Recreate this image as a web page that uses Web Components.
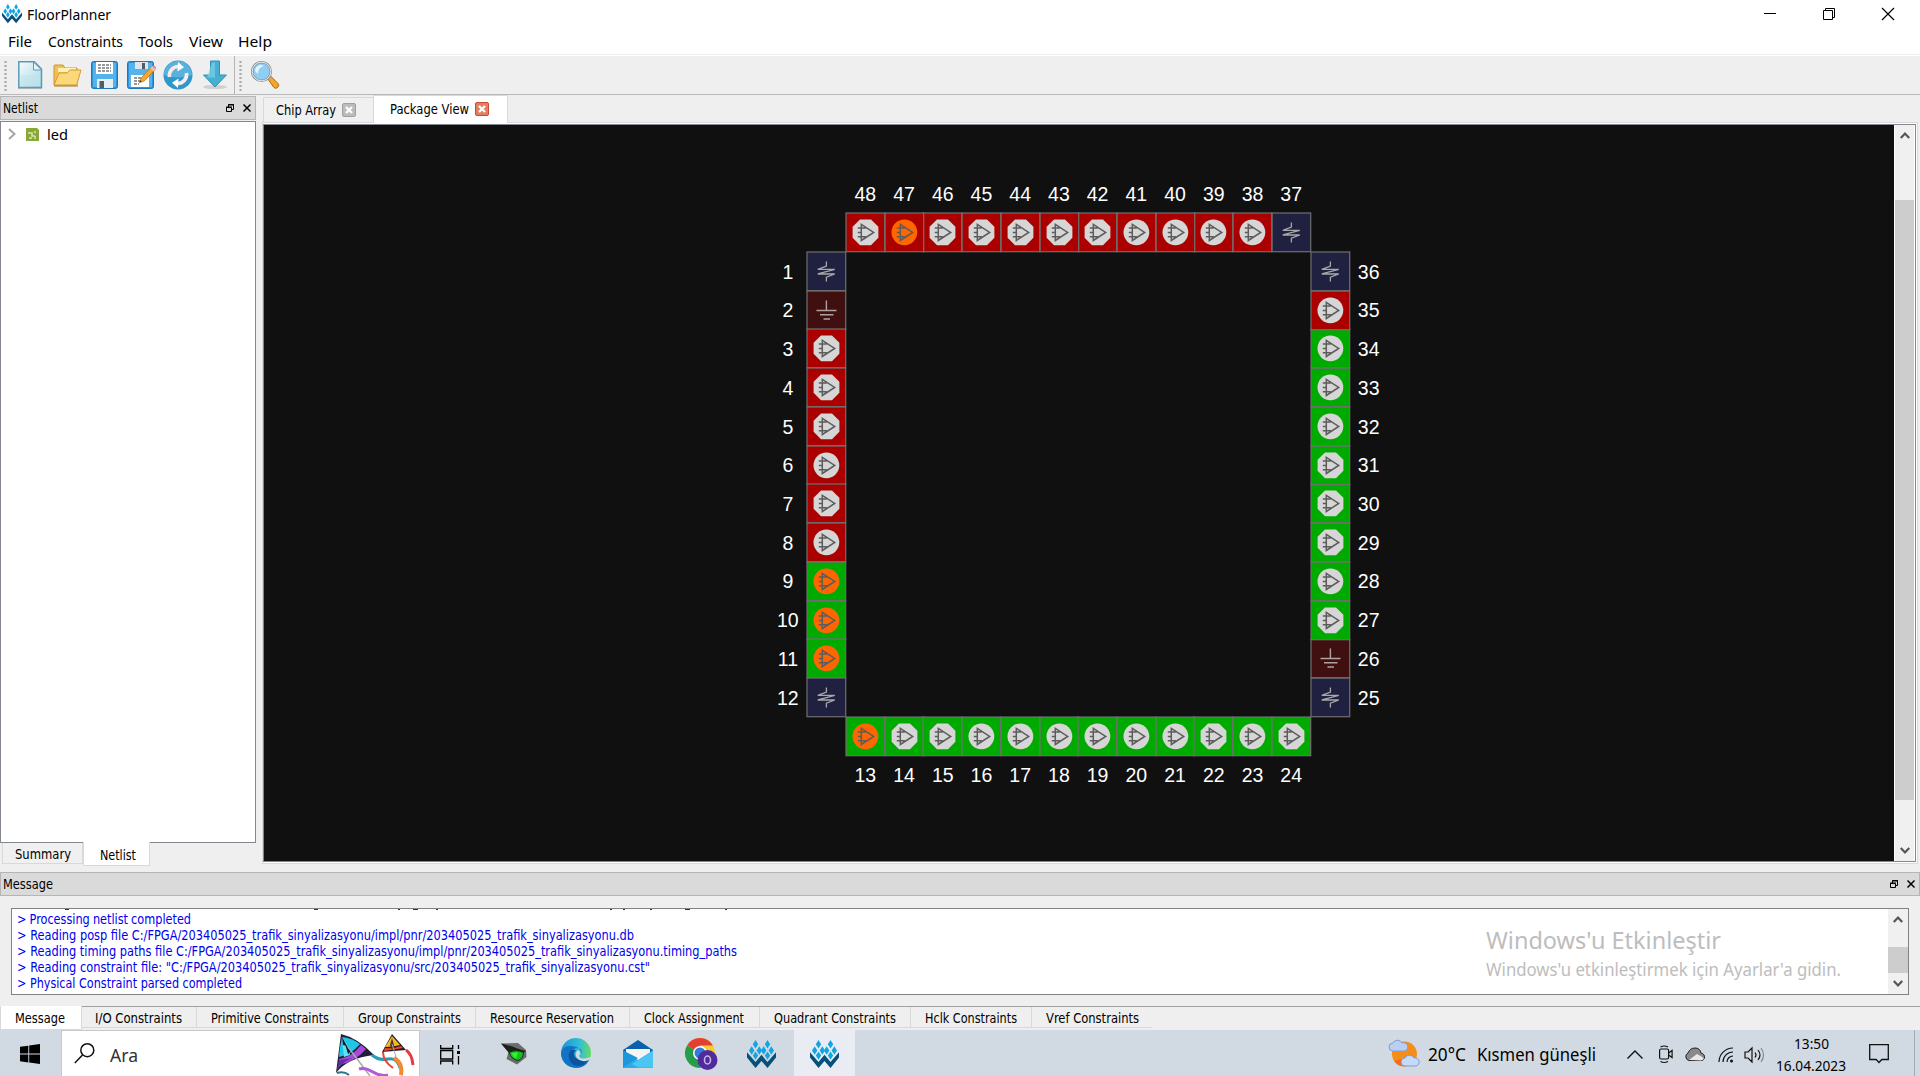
<!DOCTYPE html>
<html lang="tr">
<head>
<meta charset="utf-8">
<title>FloorPlanner</title>
<style>
html,body{margin:0;height:100%;overflow:hidden;background:#efefef;color:#000}
</style>
</head>
<body>
<floor-planner></floor-planner>
<script>
const pending=[];
class FitText extends HTMLElement{
  constructor(){super();this.attachShadow({mode:'open'}).innerHTML=`<style>:host{display:block;flex:none;white-space:pre}span{display:inline-block;transform-origin:0 50%}</style><span><slot></slot></span>`;}
  connectedCallback(){pending.push(this);}
  fit(){const w=parseFloat(this.getAttribute('w'));if(!w)return;const s=this.shadowRoot.querySelector('span');this.style.width=w+'px';const n=s.offsetWidth?s.getBoundingClientRect().width:w;s.style.transform=`scaleX(${w/n})`;}
}
customElements.define('fit-text',FitText);

function make(tag,css,html){
  customElements.define(tag,class extends HTMLElement{
    constructor(){super();this.attachShadow({mode:'open'}).innerHTML=`<style>*{box-sizing:border-box}svg{display:block;flex:none;overflow:visible}${css}</style>${typeof html==='function'?html(this):html}`;}
  });
}

make('gowin-logo',':host{display:block;flex:none;width:var(--s,29px)}svg{width:100%}',
`<svg viewBox="0 0 29 28"><g fill="#13a5e3"><path d="M8.500 0l2.700 4.200-2.700 4.200-2.700-4.200zM20.500 0l2.700 4.200-2.700 4.200-2.700-4.200zM4.700 6.300l2.700 4.200-2.700 4.200L2 10.500zM12.300 6.300l2.700 4.200-2.700 4.200-2.700-4.200zM16.700 6.300l2.700 4.200-2.700 4.200-2.700-4.200zM24.300 6.300l2.700 4.200-2.700 4.200-2.700-4.200zM8.500 11.400l2.700 4.200-2.700 4.200-2.700-4.200zM20.500 11.400l2.700 4.200-2.700 4.200-2.700-4.200z"/></g><path d="M0 12.300l8.500 9.800 6-7.300 6 7.300 8.500-9.800v5.200l-8.500 10.500-6-7-6 7L0 17.500z" fill="#085078"/></svg>`);

make('title-bar',`:host{display:flex;height:28px;background:#fff;align-items:center;padding:0 26px 0 2px;font:15px/20px "Noto Sans",sans-serif}
gowin-logo{--s:20px;margin-right:5px}.sp{flex:1}.b{display:flex;gap:47px;align-items:center}`,
`<gowin-logo></gowin-logo><fit-text w="84">FloorPlanner</fit-text><div class="sp"></div><div class="b"><svg width="12" height="12"><path d="M0 5.500h12" stroke="#000"/></svg><svg width="12" height="12" fill="none" stroke="#000"><path d="M.5 2.500h9v9h-9zM2.500 2.500v-2h9v9h-2"/></svg><svg width="12" height="12"><path d="M0 0l12 12M12 0L0 12" stroke="#000" stroke-width="1.200"/></svg></div>`);

make('menu-bar',`:host{display:flex;height:28px;background:#fff;border-bottom:1px solid #fff;box-shadow:inset 0 -1px #f0f0f0;align-items:center;gap:15.500px;padding-left:8px;font:15px/20px "Noto Sans",sans-serif}fit-text{position:relative;top:-1px}`,
`<fit-text w="24">File</fit-text><fit-text w="75">Constraints</fit-text><fit-text w="35">Tools</fit-text><fit-text w="34">View</fit-text><fit-text w="34">Help</fit-text>`);

const floppy=`<rect x=".5" y=".5" width="26" height="27" rx="2" fill="#2f93d6" stroke="#1d77ba"/><rect x="2" y="2" width="23" height="24" fill="#55b3ec"/>`;
make('tool-bar',`:host{display:flex;height:39px;background:#efefef;border-bottom:1px solid #b9b9b9;align-items:center;padding-left:4px}
.h{width:3px;height:31px;background:radial-gradient(circle,#aaa 1px,transparent 1.300px) 0 0/3px 4px}.s{width:1px;height:38px;background:#b5b5b5}`,
`<div class="h"></div>
<svg width="25" height="28" style="margin-left:11px"><defs><linearGradient id="g" x1="0" y1="0" x2="1" y2="1"><stop offset="0" stop-color="#f4fbfd"/><stop offset="1" stop-color="#a8d8e6"/></linearGradient></defs><path d="M.8.800h15.500l7.200 7.200v18.500H.8z" fill="url(#g)" stroke="#5a9cb6" stroke-width="1.500"/><path d="M2.500 14h19.500v11H2.500z" fill="#bfe3ef" opacity=".6"/><path d="M15.500 1v8h8z" fill="#e6f5fa" stroke="#5a9cb6"/><path d="M0 27.500h24" stroke="#999" opacity=".6"/></svg>
<svg width="29" height="24" style="margin-left:10px"><path d="M1 22V3q0-1 1-1h8l2 3h12v17z" fill="#f3bf52" stroke="#cf9530"/><path d="M5 5h18v4H5z" fill="#fff0b8"/><path d="M1 22L6 10h8l3-3h11l-4 14q0 1-1 1z" fill="#fbd879" stroke="#d49b35"/><path d="M1 23h24" stroke="#a87a2b"/></svg>
<svg width="27" height="28" style="margin-left:8.500px">${floppy}<path d="M5 1h17v12H5z" fill="#fff"/><path d="M7 4h13M7 7h13M7 10h13" stroke="#777" stroke-width="1.500" stroke-dasharray="3 1"/><path d="M6 18h16v9H6z" fill="#e8edf0"/><path d="M8.500 20h4.500v7H8.500z" fill="#555b63"/></svg>
<svg width="30" height="28" style="margin-left:9px">${floppy}<path d="M8 1h13v7H8z" fill="#dfe5e9"/><path d="M15 2h3v6h-3z" fill="#555b63"/><path d="M4 14h18v12H4z" fill="#fff"/><path d="M7 17h9M7 20h8M7 23h5" stroke="#777" stroke-width="1.500" stroke-dasharray="3 1"/><path d="M12.500 21.500l2-5L25 5.500l3.200 3L17.500 19.800z" fill="#f9a72b" stroke="#b87520" stroke-width=".8"/><path d="M23.300 7.200l2-2.200 3.200 3.200-2 2.100z" fill="#c8cdd6"/><path d="M25.200 5.300q1.500-1.500 3.200 0t0 3.300z" fill="#e98aa0"/><path d="M12.500 21.500l.8-2.200 1.400 1.400z" fill="#333"/></svg>
<svg width="30" height="30" style="margin-left:6.500px"><circle cx="15" cy="15" r="14.500" fill="#2e97cb"/><path d="M1 15a14 14 0 0128 0q-14 5-28 0" fill="#58b2dc"/><g fill="none" stroke="#fbe9ec" stroke-width="3.600"><path d="M6.500 17A9 9 0 0116 6.500"/><path d="M23.500 13A9 9 0 0114 23.500"/></g><path d="M15 2l6 5.200-6.500 4.300zM15 28l-6-5.200 6.500-4.300z" fill="#fff"/></svg>
<svg width="27" height="30" style="margin-left:9px"><ellipse cx="13" cy="27" rx="12" ry="2" fill="#bbb" opacity=".6"/><path d="M8.500 1h9v14h7L13 27 1.500 15h7z" fill="#45b0d2" stroke="#2f93b6"/><path d="M10 2.500h3v15H5z" fill="#7fd0e6" opacity=".7"/></svg>
<div class="s" style="margin-left:5px"></div><div class="h" style="margin-left:4px"></div>
<svg width="30" height="30" style="margin-left:8px"><path d="M17.500 18.500l3-2.500 7.500 7.500q1.800 2-.5 4t-4-.5z" fill="#f6a626" stroke="#a86a18"/><circle cx="11.500" cy="11.500" r="9.300" fill="#8fcdf2" stroke="#8a969f" stroke-width="2.600"/><circle cx="11.500" cy="11.500" r="9.300" fill="none" stroke="#e6eaed"/><path d="M5 11q0-5 5.500-6.300L14 6q-6 1-6 8z" fill="#e3f4fd"/></svg>`);

make('dock-title',`:host{display:flex;height:24px;background:#dadada;border:1px solid #b5b5b5;align-items:center;padding:0 4px 0 2px;font:13.300px/16px "DejaVu Sans Condensed","DejaVu Sans",sans-serif}.sp{flex:1}.tx{padding-top:2px}svg+svg{margin-left:9px}`,
`<div class="tx"><slot></slot></div><div class="sp"></div><svg width="8" height="8" fill="none" stroke="#000"><path d="M.5 3.500h5v4h-5zM0 3h6M2.500 3V.5h5v5H6M2 1h6"/></svg><svg width="8" height="8"><path d="M.5.500l7 7M7.500.500l-7 7" stroke="#000" stroke-width="1.500"/></svg>`);

make('close-box',`:host{display:block;flex:none}`,h=>{const r=h.hasAttribute('hot');return `<svg width="14" height="14"><rect x=".5" y=".5" width="13" height="13" rx="1.500" fill="${r?'#e08060':'#bcbcbc'}" stroke="${r?'#d3452f':'#a0a0a0'}"/><path d="M4 4l6 6M10 4l-6 6" stroke="#fff" stroke-width="2.300"/></svg>`});

make('netlist-dock',`:host{display:flex;flex-direction:column;width:256px;height:770px;margin-top:1px;font:13.300px/16px "DejaVu Sans Condensed","DejaVu Sans",sans-serif}
.tree{margin-top:1px;height:722px;border:1px solid #828790;background:#fff;flex:none}
.row{display:flex;align-items:center;height:24px;padding-left:7px;font:15px/20px "Noto Sans",sans-serif}
.tabs{display:flex;align-items:flex-start;padding-left:2px}
.t{height:21px;width:81px;background:#f0f0f0;border:1px solid #d9d9d9;border-top:0;padding:4px 0 0 12px}
.t.on{height:24px;width:67px;background:#fff;padding:6px 0 0 16px;margin-top:-1px}`,
`<dock-title><fit-text w="35">Netlist</fit-text></dock-title>
<div class="tree"><div class="row"><svg width="8" height="12"><path d="M1 1l5.500 5L1 11" fill="none" stroke="#a6a6a6" stroke-width="2"/></svg><svg width="13" height="13" style="margin:0 8px 0 10px"><path d="M0 0h11l2 2v11H0z" fill="#86a93a"/><path d="M2 5h4v3h3M9 3v2M3 10h3M9 8v3" stroke="#d6e8a8" stroke-width="1.500" fill="none"/></svg><fit-text w="21">led</fit-text></div></div>
<div class="tabs"><div class="t"><fit-text w="56">Summary</fit-text></div><div class="t on"><fit-text w="36">Netlist</fit-text></div></div>`);

make('scroll-bar',`:host{display:flex;flex-direction:column;background:#f0f0f0;align-items:center;flex:none;box-sizing:border-box}.th{background:#cdcdcd;width:100%}.sp{flex:1}`,
h=>`<svg width="10" height="7" style="margin-top:${h.getAttribute('a')}px"><path d="M.8 6L5 1.500 9.200 6" fill="none" stroke="#555" stroke-width="2.200"/></svg><div class="th" style="margin-top:${h.getAttribute('g')}px;height:${h.getAttribute('t')}px"></div><div class="sp"></div><svg width="10" height="7" style="margin-bottom:${h.getAttribute('a')}px"><path d="M.8 1L5 5.500 9.200 1" fill="none" stroke="#555" stroke-width="2.200"/></svg>`);

make('chip-pin',':host{display:block;width:100%;height:100%}svg{width:100%;height:100%}',h=>{
  const k=h.getAttribute('kind'),bg=h.getAttribute('bank');
  const body=k==='v'?'<path d="M19.400 9.500v4.500l-8.600 3.300h17L10.800 22h17l-8.400 3.200v4.300" fill="none" stroke="#a8a8a8" stroke-width="1.300"/>'
  :k==='g'?'<path d="M19.400 9.500v10M9.500 19.500h20M13 23.700h13.500M16.500 28h6.500" fill="none" stroke="#b0a0a0" stroke-width="1.400"/>'
  :(k==='o'?'<path d="M14 6.400h11l7.400 7.400v11L25 32.200H14l-7.400-7.400v-11z" fill="#d6d6d6"/>':`<circle cx="19.400" cy="19.300" r="12.900" fill="${k==='u'?'#ff6600':'#d6d6d6'}"/>`)+'<path d="M15.300 11.300v16.200L27.700 19.400zM11.800 15h8M11.800 19.400h3.500M11.800 23.700h8" fill="none" stroke="#5c5c5c" stroke-width="1.500"/>';
  return `<svg viewBox="0 0 38.730 38.730"><rect width="38.730" height="38.730" fill="${bg}" stroke="#707070" stroke-width="1.200"/>${body}</svg>`});

make('package-view',`:host{display:flex;box-sizing:border-box;flex:1;background:#101010;justify-content:center;align-items:flex-start;padding:49.600px 1.500px 0 0;color:#fff;font:19.500px/1 "Liberation Sans",Arial,sans-serif}
.g{display:grid;grid-template:repeat(16,38.730px)/repeat(16,38.730px)}.n{display:flex;align-items:center;justify-content:center;padding-top:2px}`,()=>{
  const R='#aa0000',G='#00aa00',V='#202040',D='#401010';let s='';
  const kinds={};'1v 2g 3o 4o 5o 6c 7o 8c 9u 10u 11u 12v 13u 14o 15o 16c 17c 18c 19c 20c 21c 22o 23c 24o 25v 26g 27o 28c 29o 30o 31o 32c 33c 34c 35c 36v 37v 38c 39c 40c 41c 42o 43o 44o 45o 46o 47u 48o'.split(' ').forEach(x=>kinds[parseInt(x)]=x.slice(-1));
  for(let n=1;n<=48;n++){let r,c,lr,lc;
    if(n<13){r=n+2;c=2;lr=r;lc=1}else if(n<25){r=15;c=n-10;lr=16;lc=c}else if(n<37){r=39-n;c=15;lr=r;lc=16}else{r=2;c=51-n;lr=1;lc=c}
    const k=kinds[n],b=k==='v'?V:k==='g'?D:(n>8&&n<35?G:R);
    s+=`<div class="n" style="grid-area:${lr}/${lc}">${n}</div><chip-pin style="grid-area:${r}/${c}" kind="${k}" bank="${b}"></chip-pin>`;}
  return `<div class="g">${s}</div>`});

make('view-area',`:host{display:flex;flex-direction:column;width:1656px;margin-left:6px;font:13.300px/16px "DejaVu Sans Condensed","DejaVu Sans",sans-serif}
.tabs{display:flex;align-items:flex-end;height:27px;padding-left:1px}
.t{display:flex;align-items:center;height:25px;width:110px;border:1px solid #d9d9d9;border-width:1px 0 0 1px;padding-left:12px;gap:6px;background:#f0f0f0}
.t fit-text{padding-top:2px}
.t.on{height:28px;width:135px;border-right-width:1px;background:#fff;padding:0 0 1px 16px;margin-bottom:-1px;z-index:1}
.pane{border:1px solid #d9d9d9;background:#fff;padding:1px 1px 1px 0;height:742px}
.in{border:1px solid #828790;height:100%;display:flex}scroll-bar{width:21px;border:1px solid #fff;border-width:0 1px}`,
`<div class="tabs"><div class="t"><fit-text w="60">Chip Array</fit-text><close-box></close-box></div><div class="t on"><fit-text w="79">Package View</fit-text><close-box hot></close-box></div></div>
<div class="pane"><div class="in"><package-view></package-view><scroll-bar a="7" g="61" t="600"></scroll-bar></div></div>`);

make('message-dock',`:host{display:block;font:13.300px/16px "DejaVu Sans Condensed","DejaVu Sans",sans-serif}
.box{position:relative;margin:12px 11px 0;height:87px;border:1px solid #828282;background:#fff;display:flex;color:#0000f0}
.l{flex:1;padding:3px 0 0 5px}.l div{display:flex;gap:4.500px}scroll-bar{width:20px}.c{position:absolute;left:0;top:0}
.w{position:absolute;left:1474px;top:14px;color:#bdbdbd;font:18px/24px "Noto Sans",sans-serif}.w .a{font-size:24px;line-height:34px}`,
`<dock-title><fit-text w="50">Message</fit-text></dock-title>
<div class="box"><svg class="c" width="740" height="2" fill="#2222cc"><path d="M53 0h4v1h-4zM302 0h4v1h-4zM386 0h2v1h-2zM401 0h5v1h-5zM424 0h2v1h-2zM598 0h2v1h-2zM611 0h2v1h-2zM638 0h2v1h-2zM673 0h5v1h-5zM713 0h2v1h-2z"/></svg>
<div class="l"><fit-text w="174" style="word-spacing:-.5px">&gt; Processing netlist completed</fit-text><fit-text w="617">&gt; Reading posp file C:/FPGA/203405025_trafik_sinyalizasyonu/impl/pnr/203405025_trafik_sinyalizasyonu.db</fit-text><fit-text w="720">&gt; Reading timing paths file C:/FPGA/203405025_trafik_sinyalizasyonu/impl/pnr/203405025_trafik_sinyalizasyonu.timing_paths</fit-text><fit-text w="633">&gt; Reading constraint file: "C:/FPGA/203405025_trafik_sinyalizasyonu/src/203405025_trafik_sinyalizasyonu.cst"</fit-text><fit-text w="225">&gt; Physical Constraint parsed completed</fit-text></div>
<scroll-bar a="7" g="24" t="26"></scroll-bar>
<div class="w"><fit-text class="a" w="235">Windows'u Etkinleştir</fit-text><fit-text w="355">Windows'u etkinleştirmek için Ayarlar'a gidin.</fit-text></div></div>`);

const tabs=[['I/O Constraints',115,87],['Primitive Constraints',147,118],['Group Constraints',132,103],['Resource Reservation',154,124],['Clock Assignment',130,100],['Quadrant Constraints',151,122],['Hclk Constraints',121,92],['Vref Constraints',120,93]];
make('bottom-tabs',`:host{display:flex;height:24px;margin-top:11px;font:13.300px/16px "DejaVu Sans Condensed","DejaVu Sans",sans-serif}
.m{width:82px;height:24px;background:#fff;border:1px solid #d9d9d9;border-top:0;padding:5px 0 0 14px}.r{flex:1;display:flex;border-top:1px solid #a0a0a0}
.t{height:21px;border:1px solid #d9d9d9;border-width:0 1px 1px 0;padding:4px 0 0 14px}.t:first-child{padding-left:13px}.t:last-child{border-right:0}`,
`<div class="m"><fit-text w="50">Message</fit-text></div><div class="r">${tabs.map(t=>`<div class="t" style="width:${t[1]}px"><fit-text w="${t[2]}">${t[0]}</fit-text></div>`).join('')}</div>`);

make('task-bar',`:host{display:flex;height:46px;margin-top:0;background:#d1d9e3;align-items:center;font:18px/24px "Noto Sans",sans-serif}
fit-text{padding-top:2px}
.st{width:61px;padding:2px 0 0 20px}.se{width:359px;height:46px;background:#fff;border:1px solid #c9c9c9;border-bottom:0;display:flex;align-items:center;padding-left:12px;color:#333}
.ac{width:61px;height:46px;background:#e9edf3;margin-left:18px;display:flex;align-items:center;justify-content:center}
.sp{flex:1}.ck{width:70px;font-size:15px;line-height:20px;display:flex;flex-direction:column;align-items:center;margin-left:12px}.e{width:6px;height:46px;border-left:1px solid #a3aab6;margin-left:25px}`,
`<div class="st"><svg width="20" height="20"><path d="M0 2.800l8.300-1.100v7.900H0zM9.200 1.500L20 0v9.600H9.200zM0 10.500h8.300v7.900L0 17.300zM9.200 10.500H20V20L9.200 18.500z"/></svg></div>
<div class="se"><svg width="21" height="21" fill="none" stroke="#111" stroke-width="1.500"><circle cx="13.300" cy="7.200" r="6.500"/><path d="M8.500 12L.8 20"/></svg><fit-text w="28" style="margin-left:15px">Ara</fit-text>
<svg width="84" height="44" style="margin-left:196px;overflow:hidden"><path d="M7 2L2 41Q13 26 40 23Q24 6 7 2z" fill="#221c36"/><path d="M8 5Q5 20 5 25Q17 23 26 12Q18 6 8 5z" fill="#1fc7e6"/><path d="M8 5L13 12 16 23 10 25z" fill="#60e3f5"/><path d="M5 27Q18 25 27 13L32 17Q22 29 5 33z" fill="#a64adb"/><path d="M5 28L3 38Q12 27 19 26z" fill="#6030a8"/><path d="M8 5L13 14 9 13zM11 12l6 7-3 3z" fill="#111829"/><path d="M14 15L36 44" stroke="#aaa" stroke-width="1.500"/><path d="M38 23Q45 29 54 27T66 36" fill="none" stroke="#279cba" stroke-width="3"/><path d="M25 37Q31 35 39 40T54 43" fill="none" stroke="#b25bd9" stroke-width="3"/><path d="M3 41Q10 39 15 43" fill="none" stroke="#23768a" stroke-width="2"/><path d="M58 2L48 20 72 18z" fill="#2a1b22"/><path d="M58 4L51 15Q59 15 66 13z" fill="#f6b926"/><path d="M51 16Q59 17 67 14L69 16 50 19z" fill="#ee4a2e"/><path d="M58 6l2 7-2 5-2-5z" fill="#4b3822"/><path d="M58 12L68 44" stroke="#aaa"/><path d="M49 20Q49 29 59 36" fill="none" stroke="#e84436" stroke-width="2"/><path d="M72 18Q78 22 79 33" fill="none" stroke="#e23c45" stroke-width="3"/><path d="M60 26Q69 31 67 43" fill="none" stroke="#f18a35" stroke-width="4"/></svg></div>
<svg width="20" height="20" fill="none" stroke="#000" stroke-width="1.300" style="margin:3px 0 0 20px"><path d="M.7 0v3.500h12V0M.7 19.500V16h12v3.500M.7 5.500h12v8.500H.7zM18.500 0v4M18.500 11v8.500"/><path d="M17 6h3v3h-3z" fill="#000" stroke="none"/></svg>
<svg width="26" height="22" style="margin:2px 0 0 41px"><path d="M0 .5L17 0 25 7 25.500 14 16 21.500 5.500 16 7.500 9z" fill="#6a6d6b"/><path d="M0 .5Q10 3 15 5T25 8L22 10Q14 5 8 10z" fill="#1c1f1d"/><path d="M8 9.500Q15 6 22.500 9.500Q22 16 17 17.500Q11 17 8 9.500z" fill="#10c51b" stroke="#123216"/><path d="M10.500 10.500Q14 8.500 17 9.500L15 15.500Q12 14 10.500 10.500z" fill="#39ec3c"/></svg>
<svg width="30" height="30" style="margin-left:34px"><defs><linearGradient id="e1"><stop stop-color="#1b91d3"/><stop offset=".6" stop-color="#31bddb"/><stop offset="1" stop-color="#67da65"/></linearGradient></defs><circle cx="15" cy="15" r="15" fill="url(#e1)"/><path d="M0 16Q1 7 11 8Q21 9 20 16Q22 11 17 10Q10 10 10 18Q12 27 22 25L28 22Q24 30 15 30Q2 29 0 16z" fill="#1173c4"/><path d="M10 12Q6 16 9 23Q13 30 22 27L28 22Q20 25 15 20Q11 16 15 12z" fill="#0d529f"/><path d="M17 12Q21 14 18 18Q19 21 24 20.500L30 19 28 22Q21 25 16 20Q13 15 17 12z" fill="#d1d9e3"/></svg>
<svg width="30" height="28" style="margin:2px 0 0 32px"><path d="M0 10L15 0l15 10v17.500H0z" fill="#0960ad"/><path d="M3 9h24v8L15 22 3 17z" fill="#f5f5f5"/><path d="M0 10.500L15 20 30 10.500v17H0z" fill="#2bace8"/><path d="M0 27.500L15 18 0 10.500z" fill="#1c96dc"/><path d="M30 10.500L9 24 15 27.500h15z" fill="#4bc6f3"/></svg>
<svg width="33" height="32" style="margin:2px 0 0 32px"><circle cx="15" cy="15" r="15" fill="#f8cc30"/><path d="M15 15L2 7.500A15 15 0 0128 7.500H15z" fill="#e33f32"/><path d="M2 7.500A15 15 0 0015 30L21 19 15 15z" fill="#259d4d"/><circle cx="15" cy="15" r="7" fill="#fff"/><circle cx="15" cy="15" r="5.500" fill="#3679dd"/><circle cx="22.500" cy="22" r="10" fill="#512b9c"/><ellipse cx="22.500" cy="22" rx="3" ry="4" fill="none" stroke="#c5b6e3" stroke-width="1.600"/></svg>
<gowin-logo style="margin:2px 0 0 29px"></gowin-logo><div class="ac"><gowin-logo style="margin-top:2px"></gowin-logo></div><div class="sp"></div>
<svg width="30" height="28"><circle cx="15.500" cy="15" r="12.500" fill="#f68d18"/><path d="M5 22a12 12 0 0021-2L12 20z" fill="#f26d17"/><path d="M4 12a4 4 0 010-8 5 5 0 019 0 4 4 0 013 8z" fill="#b9cff4" stroke="#7c9edc"/><path d="M16 27a4 4 0 010-8 5 5 0 019 0 4 4 0 012 8z" fill="#c6d9f9" stroke="#7c9edc"/></svg>
<fit-text w="38" style="margin-left:9px">20°C</fit-text><fit-text w="119" style="margin-left:11px">Kısmen güneşli</fit-text>
<svg width="16" height="9" style="margin:2px 0 0 31px"><path d="M.5 8.500L8 1l7.500 7.500" fill="none" stroke="#111" stroke-width="1.400"/></svg>
<svg width="14" height="18" fill="none" stroke="#111" stroke-width="1.200" style="margin:2px 0 0 16px"><rect x=".6" y="4" width="9" height="10" rx="1.500"/><path d="M9.600 8l3.500-2.500v7L9.600 10M1.500 2Q5 0 9 2M1.500 16.500Q5 18.500 9 16.500"/></svg>
<svg width="20" height="15" style="margin:2px 0 0 12px"><path d="M4 13.500a4 4 0 01-1-7.500Q5 1 10 1t6 5q4 1 3.500 5-1 3-4 2.500z" fill="#8a8a8a" stroke="#222"/><path d="M4 13L12 7q6 3 7 5l-3 1.500z" fill="#e9e9e9"/></svg>
<svg width="16" height="16" fill="none" stroke="#111" stroke-width="1.200" style="margin:3px 0 0 13px"><path d="M1 15A14 14 0 0115 1M5 15A10 10 0 0115 5M9 15a6 6 0 016-6" /><circle cx="13.500" cy="14" r="1.500" fill="#111" stroke="none"/></svg>
<svg width="20" height="16" fill="none" stroke="#111" stroke-width="1.200" style="margin:3px 0 0 10px"><path d="M1 5h3l4-4v14l-4-4H1zM11 5.500q2 2.500 0 5M14 3q4 5 0 10"/><path d="M17 1q5 7 0 14" stroke="#888"/></svg>
<div class="ck"><fit-text w="35">13:50</fit-text><fit-text w="70">16.04.2023</fit-text></div>
<svg width="20" height="20" style="margin:2px 0 0 23px"><path d="M.7.700h18.600v14.800h-6.500L10 18.500l-2.800-3H.7z" fill="none" stroke="#111" stroke-width="1.300"/></svg><div class="e"></div>`);

make('floor-planner',`:host{display:flex;flex-direction:column;width:1920px;height:1076px;background:#efefef}.mid{display:flex;height:777px}`,
`<title-bar></title-bar><menu-bar></menu-bar><tool-bar></tool-bar><div class="mid"><netlist-dock></netlist-dock><view-area></view-area></div><message-dock></message-dock><bottom-tabs></bottom-tabs><task-bar></task-bar>`);
pending.forEach(e=>e.fit());
</script>
</body>
</html>
